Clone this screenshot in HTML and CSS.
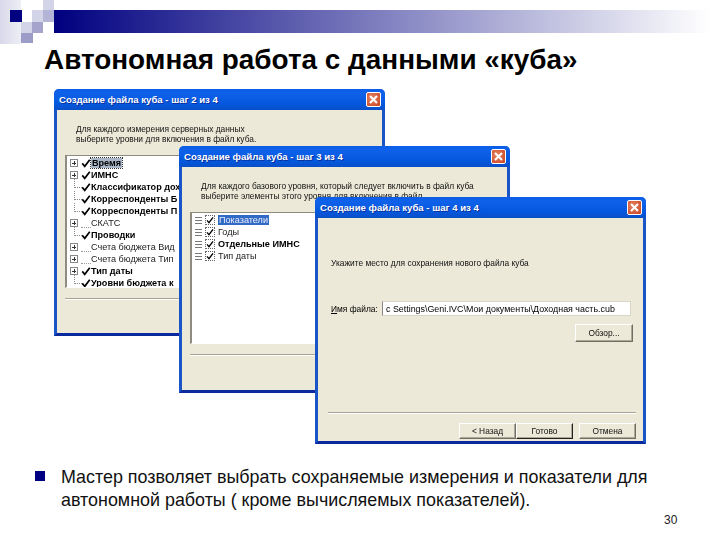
FILE: index.html
```html
<!DOCTYPE html>
<html lang="ru">
<head>
<meta charset="utf-8">
<title>Автономная работа с данными «куба»</title>
<link rel="stylesheet" href="styles.css">
</head>
<body>
<svg class="defs" width="0" height="0" aria-hidden="true">
  <symbol id="chk" viewBox="0 0 12 12"><path d="M1.5 6.5 L4.5 10 L10.5 2" fill="none" stroke="#000" stroke-width="2"/></symbol>
  <symbol id="x" viewBox="0 0 15 15"><path d="M4 4 L11 11 M11 4 L4 11" fill="none" stroke="#fff" stroke-width="2"/></symbol>
</svg>
<main class="slide">
  <div class="motif" aria-hidden="true">
    <i class="sq q1"></i><i class="sq q2"></i><i class="sq q3"></i><i class="sq q4"></i><i class="sq q5"></i><i class="sq q6"></i><i class="sq q7"></i><i class="sq q8"></i>
  </div>
  <div class="band"></div>
  <h1 class="title">Автономная работа с данными «куба»</h1>

  <section class="stage">
    <div class="win w1">
      <div class="bar"><span>Создание файла куба - шаг 2 из 4</span><b class="close"><svg width="15" height="15"><use href="#x"/></svg></b></div>
      <div class="body">
        <p class="hint">Для каждого измерения серверных данных<br>выберите уровни для включения в файл куба.</p>
        <div class="tree t1">
          <div class="row"><i class="ex"></i><svg class="ck"><use href="#chk"/></svg><span class="sel1 bold">Время</span></div>
          <div class="row"><i class="ex"></i><svg class="ck"><use href="#chk"/></svg><span class="bold">ИМНС</span></div>
          <div class="row"><i class="ln"></i><svg class="ck"><use href="#chk"/></svg><span class="bold">Классификатор доходов</span></div>
          <div class="row"><i class="ln"></i><svg class="ck"><use href="#chk"/></svg><span class="bold">Корреспонденты Б</span></div>
          <div class="row"><i class="ln"></i><svg class="ck"><use href="#chk"/></svg><span class="bold">Корреспонденты П</span></div>
          <div class="row"><i class="ex"></i><i class="nock"></i><span>СКАТС</span></div>
          <div class="row"><i class="ln"></i><svg class="ck"><use href="#chk"/></svg><span class="bold">Проводки</span></div>
          <div class="row"><i class="ex"></i><i class="nock"></i><span>Счета бюджета Вид</span></div>
          <div class="row"><i class="ex"></i><i class="nock"></i><span>Счета бюджета Тип</span></div>
          <div class="row"><i class="ex"></i><svg class="ck"><use href="#chk"/></svg><span class="bold">Тип даты</span></div>
          <div class="row"><i class="ln"></i><svg class="ck"><use href="#chk"/></svg><span class="bold">Уровни бюджета к</span></div>
        </div>
        <hr class="sep">
      </div>
    </div>

    <div class="win w2">
      <div class="bar"><span>Создание файла куба - шаг 3 из 4</span><b class="close"><svg width="15" height="15"><use href="#x"/></svg></b></div>
      <div class="body">
        <p class="hint">Для каждого базового уровня, который следует включить в файл куба<br>выберите элементы этого уровня для включения в файл.</p>
        <div class="tree t2">
          <div class="row"><i class="eq"></i><i class="box"><svg class="ck"><use href="#chk"/></svg></i><span class="sel2">Показатели</span></div>
          <div class="row"><i class="eq"></i><i class="box"><svg class="ck"><use href="#chk"/></svg></i><span>Годы</span></div>
          <div class="row"><i class="eq"></i><i class="box"><svg class="ck"><use href="#chk"/></svg></i><span class="bold">Отдельные ИМНС</span></div>
          <div class="row"><i class="eq"></i><i class="box"><svg class="ck"><use href="#chk"/></svg></i><span>Тип даты</span></div>
        </div>
        <hr class="sep">
      </div>
    </div>

    <div class="win w3">
      <div class="bar"><span>Создание файла куба - шаг 4 из 4</span><b class="close"><svg width="15" height="15"><use href="#x"/></svg></b></div>
      <div class="body">
        <p class="hint hint3">Укажите место для сохранения нового файла куба</p>
        <div class="file">
          <label class="flabel"><u>И</u>мя файла:</label>
          <div class="input">c Settings\Geni.IVC\Мои документы\Доходная часть.cub</div>
        </div>
        <div class="browse"><button class="btn bw">Обзор...</button></div>
        <hr class="sep sep3">
        <div class="actions">
          <button class="btn">&lt; Назад</button><button class="btn def">Готово</button><button class="btn gap">Отмена</button>
        </div>
      </div>
    </div>
  </section>

  <ul class="points">
    <li>Мастер позволяет выбрать сохраняемые измерения и показатели для автономной работы ( кроме вычисляемых показателей).</li>
  </ul>
  <div class="num">30</div>
</main>
</body>
</html>
```
FILE: styles.css
```css
* { box-sizing: border-box; }
html, body { margin: 0; padding: 0; background: #fff; }
.defs { position: absolute; }
.slide { position: relative; width: 720px; height: 540px; overflow: hidden; font-family: "Liberation Sans", Arial, sans-serif; color: #000; }

.motif { position: absolute; z-index: 1; left: 0; top: 0; width: 54px; height: 44px; background: linear-gradient(90deg, #d8d8ea 0, #eeeef6 21px, #ffffff 21px); }
.sq { position: absolute; display: block; }
.q1 { left: 10px; top: 10px; width: 12px; height: 12px; background: #000080; }
.q2 { left: 32px; top: 10px; width: 11px; height: 12px; background: #d4d4e8; }
.q3 { left: 43px; top: 10px; width: 11px; height: 12px; background: #b4b4d6; }
.q4 { left: 43px; top: 0; width: 11px; height: 10px; background: #d4d4e8; }
.q5 { left: 32px; top: 0; width: 11px; height: 10px; background: #fff; }
.q6 { left: 21px; top: 22px; width: 11px; height: 11px; background: #d4d4e8; }
.q7 { left: 32px; top: 22px; width: 11px; height: 11px; background: #a4a4cc; }
.q8 { left: 21px; top: 33px; width: 12px; height: 10px; background: #9c9cc8; }
.band { position: absolute; left: 54px; right: 10px; top: 10px; height: 23px; background: linear-gradient(90deg, #000080 0, #ffffff 100%); }

.title { position: absolute; left: 44px; top: 44px; margin: 0; font-size: 27.9px; line-height: 32px; font-weight: 700; white-space: nowrap; }

.win { position: absolute; width: 331px; height: 247px; border: 3px solid #1a55c8; border-top: 0; border-bottom-color: #0a2a9e; border-radius: 5px 5px 0 0; background: #ece9d8; font-size: 8.4px; }
.w1 { left: 54px; top: 89px; }
.w2 { left: 179px; top: 146px; }
.w3 { left: 315px; top: 197px; }
.bar { height: 21px; margin: 0 -3px; padding: 0 4px 0 5px; display: flex; align-items: center; justify-content: space-between; border-radius: 5px 5px 0 0; background: linear-gradient(180deg, #0a5de6 0, #0f61ea 20%, #0458dd 70%, #0a4fc8 100%); color: #fff; font-weight: 700; font-size: 9.6px; text-shadow: 1px 1px 0 #0a2f9a; }
.close { width: 15px; height: 15px; display: block; border-radius: 2px; border: 1px solid #fff; background: radial-gradient(circle at 40% 40%, #e88868, #c8401c); }
.close svg { display: block; margin: -1px; }
.body { height: 223px; padding: 0 0 0 8px; }
.hint, .row, .btn, .input, .flabel { filter: blur(.3px); }
.hint { margin: 0; padding: 14px 0 0 11px; line-height: 10px; color: #111; white-space: nowrap; overflow: hidden; }
.hint3 { padding: 40px 0 0 5px; }

.tree { background: #fff; border: 1px solid #fff; border-left: 2px solid #8e8c80; border-top: 1px solid #8e8c80; width: 320px; overflow: hidden; }
.t1 { margin-top: 11px; height: 133px; padding-top: 1px; }
.t2 { margin-top: 11px; height: 132px; padding-top: 1px; }
.row { height: 12px; display: flex; align-items: center; white-space: nowrap; color: #222; font-size: 9.1px; }
.t2 .row, .t1 .row { padding-left: 3px; }
.bold { font-weight: 700; color: #000; }
.ex { width: 8px; height: 8px; margin-right: 3px; border: 1px solid #888; background: linear-gradient(#333,#333) center/4px 1px no-repeat, linear-gradient(#333,#333) center/1px 4px no-repeat, #fff; }
.ln { width: 8px; height: 9px; margin-right: 3px; border-left: 1px dotted #888; border-bottom: 1px dotted #888; transform: translate(4px,-4px); }
.eq { width: 7px; height: 7px; margin-right: 3px; border-top: 1px solid #777; border-bottom: 1px solid #777; background: linear-gradient(#777,#777) center/100% 1px no-repeat; }
.ck { width: 10px; height: 10px; display: block; flex: none; }
.nock { width: 10px; height: 10px; border-bottom: 1px dotted #999; }
.box { width: 10px; height: 10px; margin-right: 3px; border: 1px dotted #666; }
.box .ck { width: 8px; height: 8px; }
.sel1 { background: #a9b6c8; outline: 1px dotted #333; padding: 0 1px; }
.sel2 { background: #316ac5; color: #eef; padding: 0 1px; }
.sep { height: 2px; margin: 10px 0 0 0; border: 0; border-top: 1px solid #a6a496; border-bottom: 1px solid #fff; }

.file { display: flex; align-items: center; margin-top: 33px; padding-left: 5px; }
.flabel { width: 51px; white-space: nowrap; }
.input { width: 249px; height: 15px; line-height: 14px; padding-left: 3px; background: #fff; border: 1px solid #d8d6c8; border-left-color: #888; white-space: nowrap; overflow: hidden; font-size: 8.9px; }
.browse { display: flex; justify-content: flex-end; padding: 8px 10px 0 0; }
.btn { width: 58px; height: 17px; padding: 0; font: inherit; font-size: 8.4px; color: #111; background: #ece9d8; border: 1px solid; border-color: #fff #716f64 #716f64 #fff; box-shadow: inset -1px -1px 0 #aca899; }
.bw { height: 18px; }
.sep3 { margin: 70px 7px 0 2px; }
.actions { display: flex; padding: 9px 0 0 133px; }
.actions .btn { width: 57px; height: 16px; }
.def { border-color: #fff #222 #222 #fff; }
.actions .gap { margin-left: 6px; }

.points { position: absolute; left: 61px; top: 466px; width: 600px; margin: 0; padding: 0; list-style: none; font-size: 17.9px; line-height: 23px; color: #111; }
.points li { position: relative; }
.points li::before { content: ""; position: absolute; left: -26px; top: 5px; width: 10px; height: 10px; background: #000080; }
.num { position: absolute; left: 664px; top: 513px; font-size: 12px; line-height: 14px; color: #222; }
```
